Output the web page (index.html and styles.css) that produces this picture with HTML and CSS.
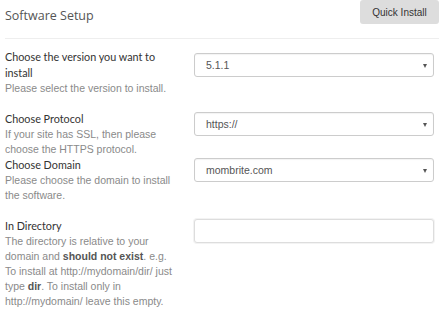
FILE: index.html
```html
<!DOCTYPE html>
<html lang="en">
<head>
  <meta charset="UTF-8">
  <meta name="viewport" content="width=device-width, initial-scale=1.0">
  <title>Software Setup</title>
  <link rel="stylesheet" href="styles.css">
</head>
<body>

  <div class="panel">
    <div class="panel-head">
      <h2>Software Setup</h2>
      <button class="btn-quick">Quick Install</button>
    </div>

    <div class="form">
      <div class="row">
        <div class="info">
          <label class="lbl">Choose the version you want to install</label>
          <p class="help">Please select the version to install.</p>
        </div>
        <div class="field first">
          <div class="select">5.1.1</div>
        </div>
      </div>

      <div class="row tight">
        <div class="info">
          <label class="lbl">Choose Protocol</label>
          <p class="help">If your site has SSL, then please choose the HTTPS protocol.</p>
        </div>
        <div class="field">
          <div class="select">https://</div>
        </div>
      </div>

      <div class="row">
        <div class="info">
          <label class="lbl">Choose Domain</label>
          <p class="help">Please choose the domain to install the&nbsp;software.</p>
        </div>
        <div class="field">
          <div class="select">mombrite.com</div>
        </div>
      </div>

      <div class="row">
        <div class="info">
          <label class="lbl">In Directory</label>
          <p class="help">The directory is relative to your domain and <b>should not exist</b>. e.g. To&nbsp;install at http://mydomain/dir/ just type <b>dir</b>. To install only in http://mydomain/ leave this empty.</p>
        </div>
        <div class="field">
          <input type="text" class="text-input">
        </div>
      </div>
    </div>
  </div>

</body>
</html>
```

FILE: styles.css
```css
body {
  margin: 0;
  background-color: #fff;
  font-family: "Liberation Sans", Arial, sans-serif;
}

.panel {
  padding: 0 9px 0 5px;
}

.panel-head {
  display: flex;
  justify-content: space-between;
  align-items: flex-start;
  height: 38px;
  border-bottom: 1px solid #eee;
  margin-right: -5px;
}

h2 {
  margin: 7px 0 0 0;
  font-family: "Open Sans", sans-serif;
  font-weight: 400;
  font-size: 12.5px;
  color: #555;
}

.btn-quick {
  width: 79px;
  height: 24px;
  padding: 0;
  border: none;
  border-radius: 3px;
  background-color: #ddd;
  color: #333;
  font-family: "Liberation Sans", Arial, sans-serif;
  font-size: 10px;
}

.form {
  padding-top: 10px;
}

.row {
  display: grid;
  grid-template-columns: 180px 1fr;
  column-gap: 9px;
  padding-bottom: 15px;
}

.row.tight {
  padding-bottom: 0;
}

.lbl {
  display: block;
  max-width: 166px;
  font-family: Lato, sans-serif;
  font-weight: 400;
  font-size: 10.8px;
  line-height: 16px;
  color: #333;
}

.help {
  margin: 0;
  font-size: 10.5px;
  line-height: 15px;
  color: #8a8a8a;
}

.help b {
  color: #555;
}

.field {
  margin-top: 1px;
}

.field.first {
  margin-top: 4px;
}

.select {
  position: relative;
  box-sizing: border-box;
  height: 24px;
  padding-left: 11px;
  border: 1px solid #ccc;
  border-radius: 3px;
  box-shadow: inset 0 1px 1px rgba(0, 0, 0, 0.05);
  font-size: 10.5px;
  line-height: 22px;
  color: #555;
}

/* flechinha do select */
.select::after {
  content: "";
  position: absolute;
  right: 6px;
  top: 10px;
  border-left: 2px solid transparent;
  border-right: 2px solid transparent;
  border-top: 4px solid #555;
}

.text-input {
  display: block;
  box-sizing: border-box;
  width: 100%;
  height: 24px;
  margin: 0;
  border: 1px solid #ddd;
  border-radius: 3px;
  box-shadow: 0 0 0 1px #f3f3f3;
  outline: none;
}
```
